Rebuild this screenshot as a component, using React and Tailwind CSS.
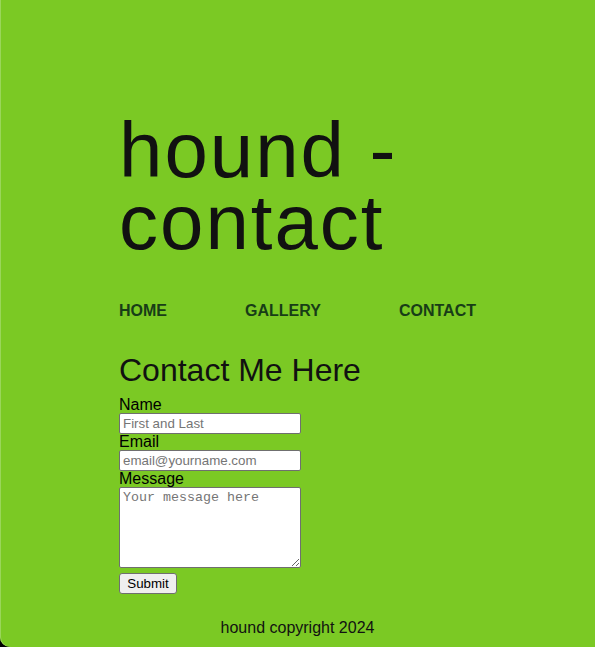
import React from 'react';

export default function App() {
  return (
    <div className="min-h-[647px] bg-black font-['Liberation_Sans',Arial,sans-serif]">
      <div className="h-[647px] bg-[#7bc924] rounded-bl-[10px] shadow-[inset_1px_0_0_#9ad65a] flex flex-col">
        <div className="mx-[20%] pt-[114px]">
          {/* Titel */}
          <h1 className="text-[78px] leading-[72px] tracking-[2px] text-[#111]">hound - contact</h1>

          {/* Navigasi */}
          <nav className="mt-[41px] flex justify-between text-base leading-6 font-bold text-[#183d17]">
            <a href="#">HOME</a>
            <a href="#">GALLERY</a>
            <a href="#">CONTACT</a>
          </nav>

          {/* Formulir kontak */}
          <h2 className="mt-[29px] mb-[8px] text-[32px] leading-[37px] text-[#111]">Contact Me Here</h2>
          <form className="flex flex-col items-start text-base leading-4 text-black">
            <label htmlFor="name">Name</label>
            <input
              id="name"
              type="text"
              placeholder="First and Last"
              className="w-[182px] h-[21px] px-[3px] bg-white border border-[#6f6f6f] rounded-[2px] text-[13.33px] placeholder:text-[#757575]"
            />
            <label htmlFor="email">Email</label>
            <input
              id="email"
              type="email"
              placeholder="email@yourname.com"
              className="w-[182px] h-[21px] px-[3px] bg-white border border-[#6f6f6f] rounded-[2px] text-[13.33px] placeholder:text-[#757575]"
            />
            <label htmlFor="message">Message</label>
            <textarea
              id="message"
              placeholder="Your message here"
              className="w-[182px] h-[81px] px-[3px] py-[2px] bg-white border border-[#6f6f6f] rounded-[2px] font-['Liberation_Mono',monospace] text-[13.33px] leading-[15px] placeholder:text-[#757575]"
            />
            <button
              type="button"
              className="mt-[5px] h-[21px] w-[58px] bg-[#efefef] border border-[#6f6f6f] rounded-[3px] text-[13.33px] leading-none"
            >
              Submit
            </button>
          </form>
        </div>

        {/* Footer */}
        <footer className="mt-auto pb-[7px] text-center text-base text-[#111]">hound copyright 2024</footer>
      </div>
    </div>
  );
}
